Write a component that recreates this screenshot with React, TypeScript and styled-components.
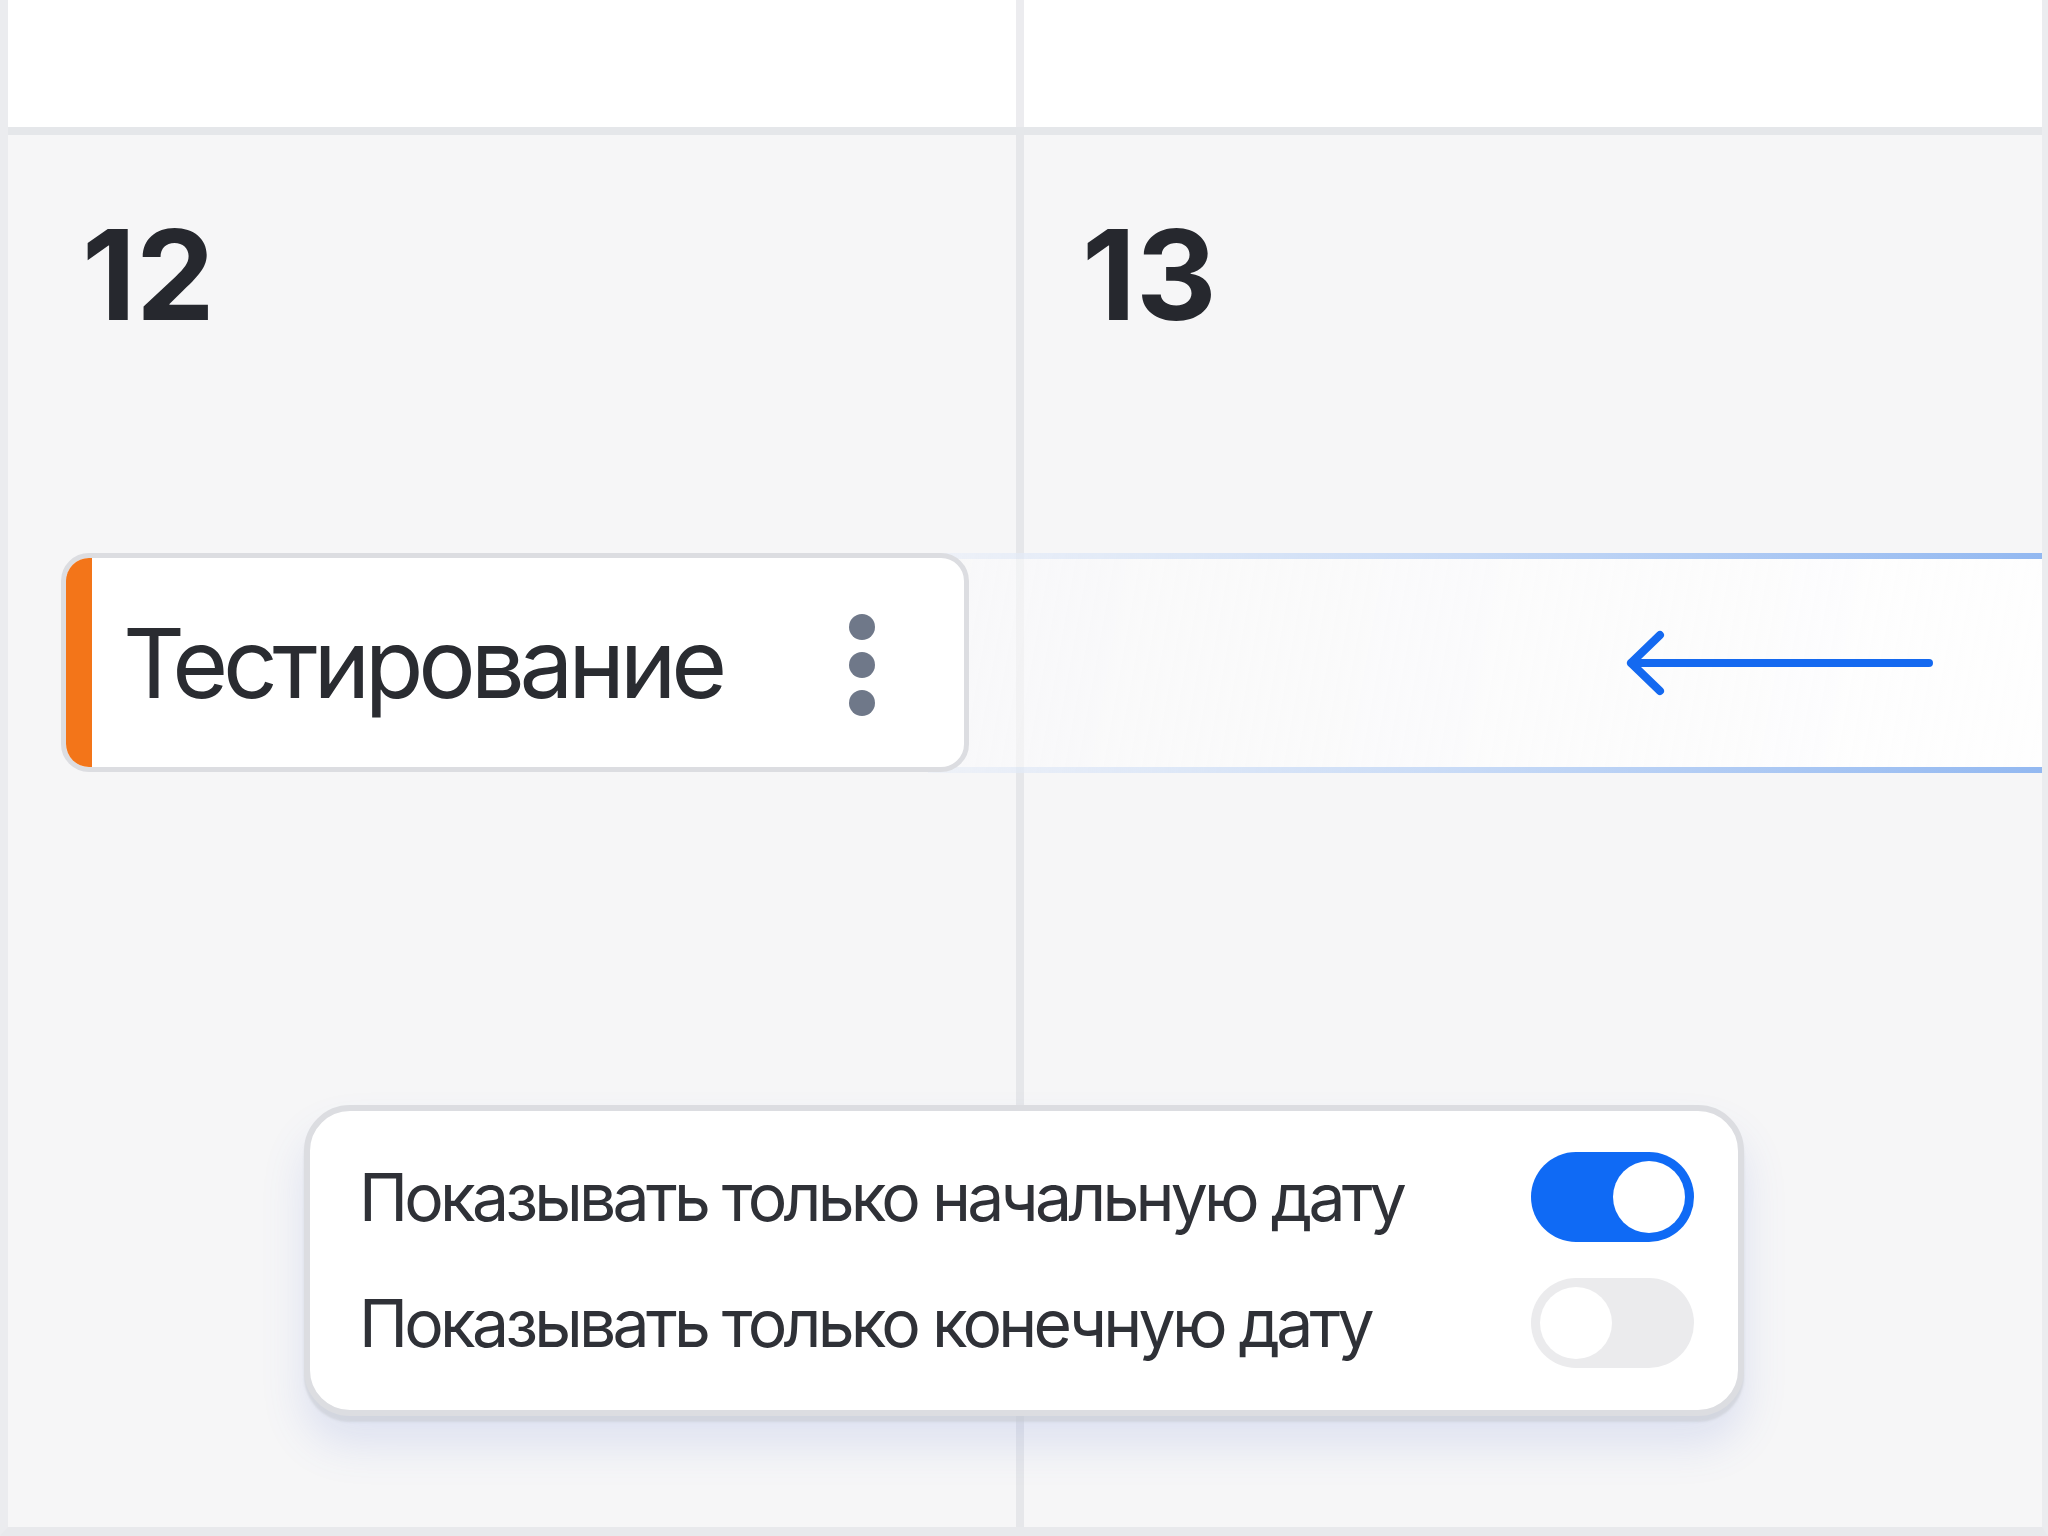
import styled, { createGlobalStyle } from "styled-components";

export default function App() {
  return (
    <>
      <GlobalStyle />
      <Frame>
        <HeadRow>
          <HeadCell />
          <VLine />
          <HeadCell />
        </HeadRow>
        <HLine />
        <Week>
          <WeekDivider />
          <DayNumber $col={1} $inset={74}>12</DayNumber>
          <DayNumber $col={3} $inset={58}>13</DayNumber>
          <DragBand>
            <ArrowLeft />
          </DragBand>
          <EventCard>
            <Accent />
            <EventTitle>Тестирование</EventTitle>
            <Kebab />
          </EventCard>
        </Week>
        <SettingsPanel>
          <SettingRow>
            <SettingLabel>Показывать только начальную дату</SettingLabel>
            <Toggle $on>
              <Knob />
            </Toggle>
          </SettingRow>
          <SettingRow>
            <SettingLabel>Показывать только конечную дату</SettingLabel>
            <Toggle>
              <Knob />
            </Toggle>
          </SettingRow>
        </SettingsPanel>
      </Frame>
    </>
  );
}

function Kebab() {
  return (
    <KebabIcon width="26" height="102" viewBox="0 0 26 102">
      <circle cx="13" cy="13" r="13" fill="#6f7889" />
      <circle cx="13" cy="51" r="13" fill="#6f7889" />
      <circle cx="13" cy="89" r="13" fill="#6f7889" />
    </KebabIcon>
  );
}

function ArrowLeft() {
  return (
    <ArrowIcon width="310" height="70" viewBox="0 0 310 70">
      <path
        d="M8 35 H306 M37 7 L8 35 L37 63"
        fill="none"
        stroke="#1469f0"
        strokeWidth="8"
        strokeLinecap="round"
        strokeLinejoin="round"
      />
    </ArrowIcon>
  );
}

const GlobalStyle = createGlobalStyle`
  html, body {
    margin: 0;
    padding: 0;
    background: #f6f6f7;
  }
  body {
    font-family: Inter, "Noto Sans", "Liberation Sans", sans-serif;
    color: #2b2d33;
  }
`;

const Frame = styled.div`
  position: relative;
  width: 2048px;
  height: 1536px;
  box-sizing: border-box;
  border-left: 8px solid #ebecef;
  border-right: 6px solid #ebecef;
  border-bottom: 9px solid #e8e9ec;
  display: grid;
  grid-template-rows: 127px 8px 1fr;
  background: #f6f6f7;
  overflow: hidden;
`;

const HeadRow = styled.div`
  display: grid;
  grid-template-columns: 1008px 8px 1fr;
`;

const HeadCell = styled.div`
  background: #ffffff;
`;

const VLine = styled.div`
  background: #ececef;
`;

const HLine = styled.div`
  background: #e5e7ea;
`;

const Week = styled.div`
  display: grid;
  grid-template-columns: 1008px 8px 1fr;
  grid-template-rows: 418px 220px 1fr;
`;

const WeekDivider = styled.div`
  grid-column: 2;
  grid-row: 1 / -1;
  background: #e6e7ea;
`;

const DayNumber = styled.div<{ $col: number; $inset: number }>`
  grid-column: ${(p) => p.$col};
  grid-row: 1;
  padding: 77px 0 0 ${(p) => p.$inset}px;
  font-size: 125px;
  line-height: 1;
  font-weight: 700;
  letter-spacing: 0;
  color: #26282e;
`;

const DragBand = styled.div`
  grid-column: 1 / -1;
  grid-row: 2;
  margin-left: 920px;
  margin-right: -6px;
  position: relative;
  z-index: 1;
  box-sizing: border-box;
  display: flex;
  align-items: center;
  justify-content: flex-end;
  padding-right: 115px;
  background: linear-gradient(
    100deg,
    rgba(250, 250, 251, 0.55),
    rgba(255, 255, 255, 0.9)
  );
  border-top: 6px solid transparent;
  border-bottom: 6px solid transparent;
  border-image: linear-gradient(
      90deg,
      rgba(200, 215, 240, 0.2),
      rgba(190, 212, 245, 0.8) 45%,
      rgba(140, 180, 240, 0.95)
    )
    1;
  border-left: 0;
  border-right: 0;
`;

const ArrowIcon = styled.svg`
  display: block;
`;

const EventCard = styled.div`
  grid-column: 1;
  grid-row: 2;
  position: relative;
  z-index: 2;
  margin-left: 53px;
  width: 908px;
  height: 219px;
  box-sizing: border-box;
  border: 5px solid #dcdde1;
  border-radius: 28px;
  background: #ffffff;
  overflow: hidden;
  display: flex;
  align-items: center;
`;

const Accent = styled.div`
  align-self: stretch;
  width: 26px;
  background: #f37519;
  flex-shrink: 0;
`;

const EventTitle = styled.div`
  margin-left: 31px;
  font-size: 96px;
  line-height: 1;
  font-weight: 400;
  color: #2a2c31;
  letter-spacing: -0.055em;
  white-space: nowrap;
`;

const KebabIcon = styled.svg`
  display: block;
  margin-left: auto;
  margin-right: 89px;
  margin-top: 4px;
`;

const SettingsPanel = styled.div`
  position: absolute;
  left: 296px;
  top: 1105px;
  width: 1440px;
  box-sizing: border-box;
  padding: 41px 44px 42px 49px;
  border: 6px solid #dcdde1;
  border-radius: 46px;
  background: #ffffff;
  box-shadow: 0 6px 2px rgba(200, 203, 210, 0.6),
    0 28px 44px rgba(80, 110, 210, 0.15);
  display: flex;
  flex-direction: column;
  gap: 36px;
  z-index: 3;
`;

const SettingRow = styled.div`
  display: flex;
  align-items: center;
  justify-content: space-between;
  height: 90px;
`;

const SettingLabel = styled.div`
  font-size: 66px;
  line-height: 1;
  color: #2f3137;
  letter-spacing: -0.057em;
  white-space: nowrap;
`;

const Toggle = styled.div<{ $on?: boolean }>`
  width: 163px;
  height: 90px;
  box-sizing: border-box;
  padding: 9px;
  border-radius: 45px;
  background: ${(p) => (p.$on ? "#0f6af5" : "#ebebed")};
  display: flex;
  justify-content: ${(p) => (p.$on ? "flex-end" : "flex-start")};
  flex-shrink: 0;
`;

const Knob = styled.div`
  width: 72px;
  height: 72px;
  border-radius: 50%;
  background: #ffffff;
`;
